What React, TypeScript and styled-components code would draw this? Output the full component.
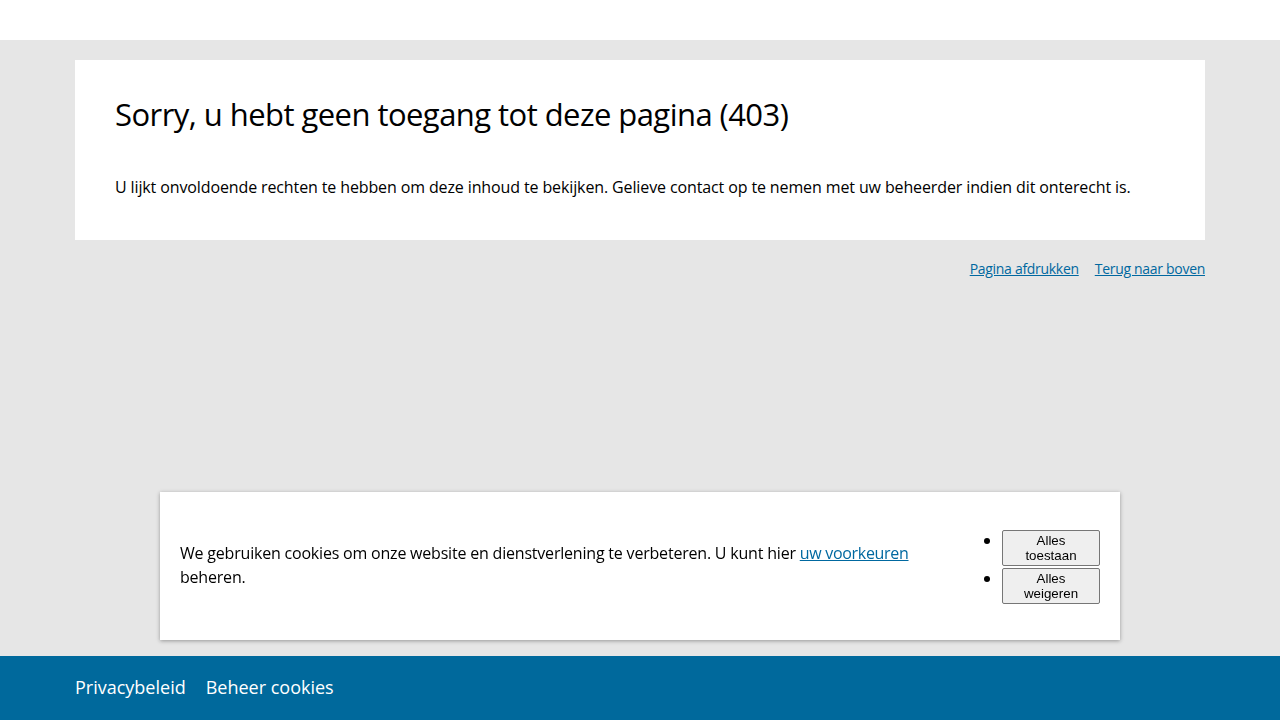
import { createGlobalStyle, styled } from "styled-components";

const GlobalStyle = createGlobalStyle`
  html, body {
    margin: 0;
    padding: 0;
    background: #e6e6e6;
    font-family: "Open Sans", "Noto Sans", sans-serif;
    color: #000;
  }
`;

const Page = styled.div`
  min-height: 720px;
  display: flex;
  flex-direction: column;
`;

const Header = styled.header`
  height: 40px;
  background: #ffffff;
`;

const Main = styled.main`
  flex: 1;
  padding: 20px 75px 0;
`;

const Card = styled.section`
  background: #ffffff;
  padding: 33px 40px 41px;
`;

const Title = styled.h1`
  margin: 0;
  font-size: 31px;
  font-weight: 400;
  line-height: 42px;
  letter-spacing: -0.55px;
`;

const Text = styled.p`
  margin: 40px 0 0;
  font-size: 16px;
  line-height: 24px;
  letter-spacing: -0.12px;
`;

const Utility = styled.div`
  display: flex;
  justify-content: flex-end;
  gap: 16px;
  padding-top: 19px;
`;

const Link = styled.a<{ $size?: number }>`
  color: #0068a0;
  font-size: ${(p) => p.$size ?? 14}px;
  text-decoration: underline;
  letter-spacing: -0.3px;
  cursor: pointer;
`;

const Footer = styled.footer`
  box-sizing: border-box;
  height: 64px;
  background: #00699c;
  display: flex;
  align-items: center;
  gap: 20px;
  padding: 0 75px 2px;
`;

const FooterLink = styled.a`
  color: #ffffff;
  font-size: 18px;
  letter-spacing: 0;
  text-decoration: none;
`;

const Banner = styled.div`
  position: fixed;
  left: 160px;
  bottom: 80px;
  width: 960px;
  height: 148px;
  box-sizing: border-box;
  background: #ffffff;
  box-shadow: 0 1px 4px rgba(0, 0, 0, 0.35);
  display: flex;
  align-items: center;
  justify-content: space-between;
  padding: 0 20px;
`;

const BannerText = styled.p`
  margin: -2px 0 0;
  width: 750px;
  font-size: 16px;
  line-height: 24px;
  letter-spacing: -0.2px;
`;

const Choices = styled.ul`
  margin: 2px 0 0;
  padding: 0 0 0 40px;
`;

const Choice = styled.li`
  font-size: 16px;
  line-height: 20px;
  & + & {
    margin-top: 2px;
  }
`;

const Button = styled.button`
  width: 98px;
  height: 36px;
  vertical-align: top;
  font-family: "Liberation Sans", Arial, sans-serif;
  font-size: 13.33px;
  line-height: 15px;
  padding: 1px 14px;
  background: #efefef;
  border: 1px solid #767676;
  border-radius: 2px;
  color: #000;
  white-space: normal;
`;

export default function App() {
  return (
    <>
      <GlobalStyle />
      <Page>
        <Header />
        <Main>
          <Card>
            <Title>Sorry, u hebt geen toegang tot deze pagina (403)</Title>
            <Text>
              U lijkt onvoldoende rechten te hebben om deze inhoud te bekijken. Gelieve contact op te nemen met uw
              beheerder indien dit onterecht is.
            </Text>
          </Card>
          <Utility>
            <Link>Pagina afdrukken</Link>
            <Link>Terug naar boven</Link>
          </Utility>
        </Main>
        <Footer>
          <FooterLink>Privacybeleid</FooterLink>
          <FooterLink>Beheer cookies</FooterLink>
        </Footer>
      </Page>
      <Banner>
        <BannerText>
          We gebruiken cookies om onze website en dienstverlening te verbeteren. U kunt hier{" "}
          <Link $size={16}>uw voorkeuren</Link> beheren.
        </BannerText>
        <Choices>
          <Choice>
            <Button>Alles toestaan</Button>
          </Choice>
          <Choice>
            <Button>Alles weigeren</Button>
          </Choice>
        </Choices>
      </Banner>
    </>
  );
}
